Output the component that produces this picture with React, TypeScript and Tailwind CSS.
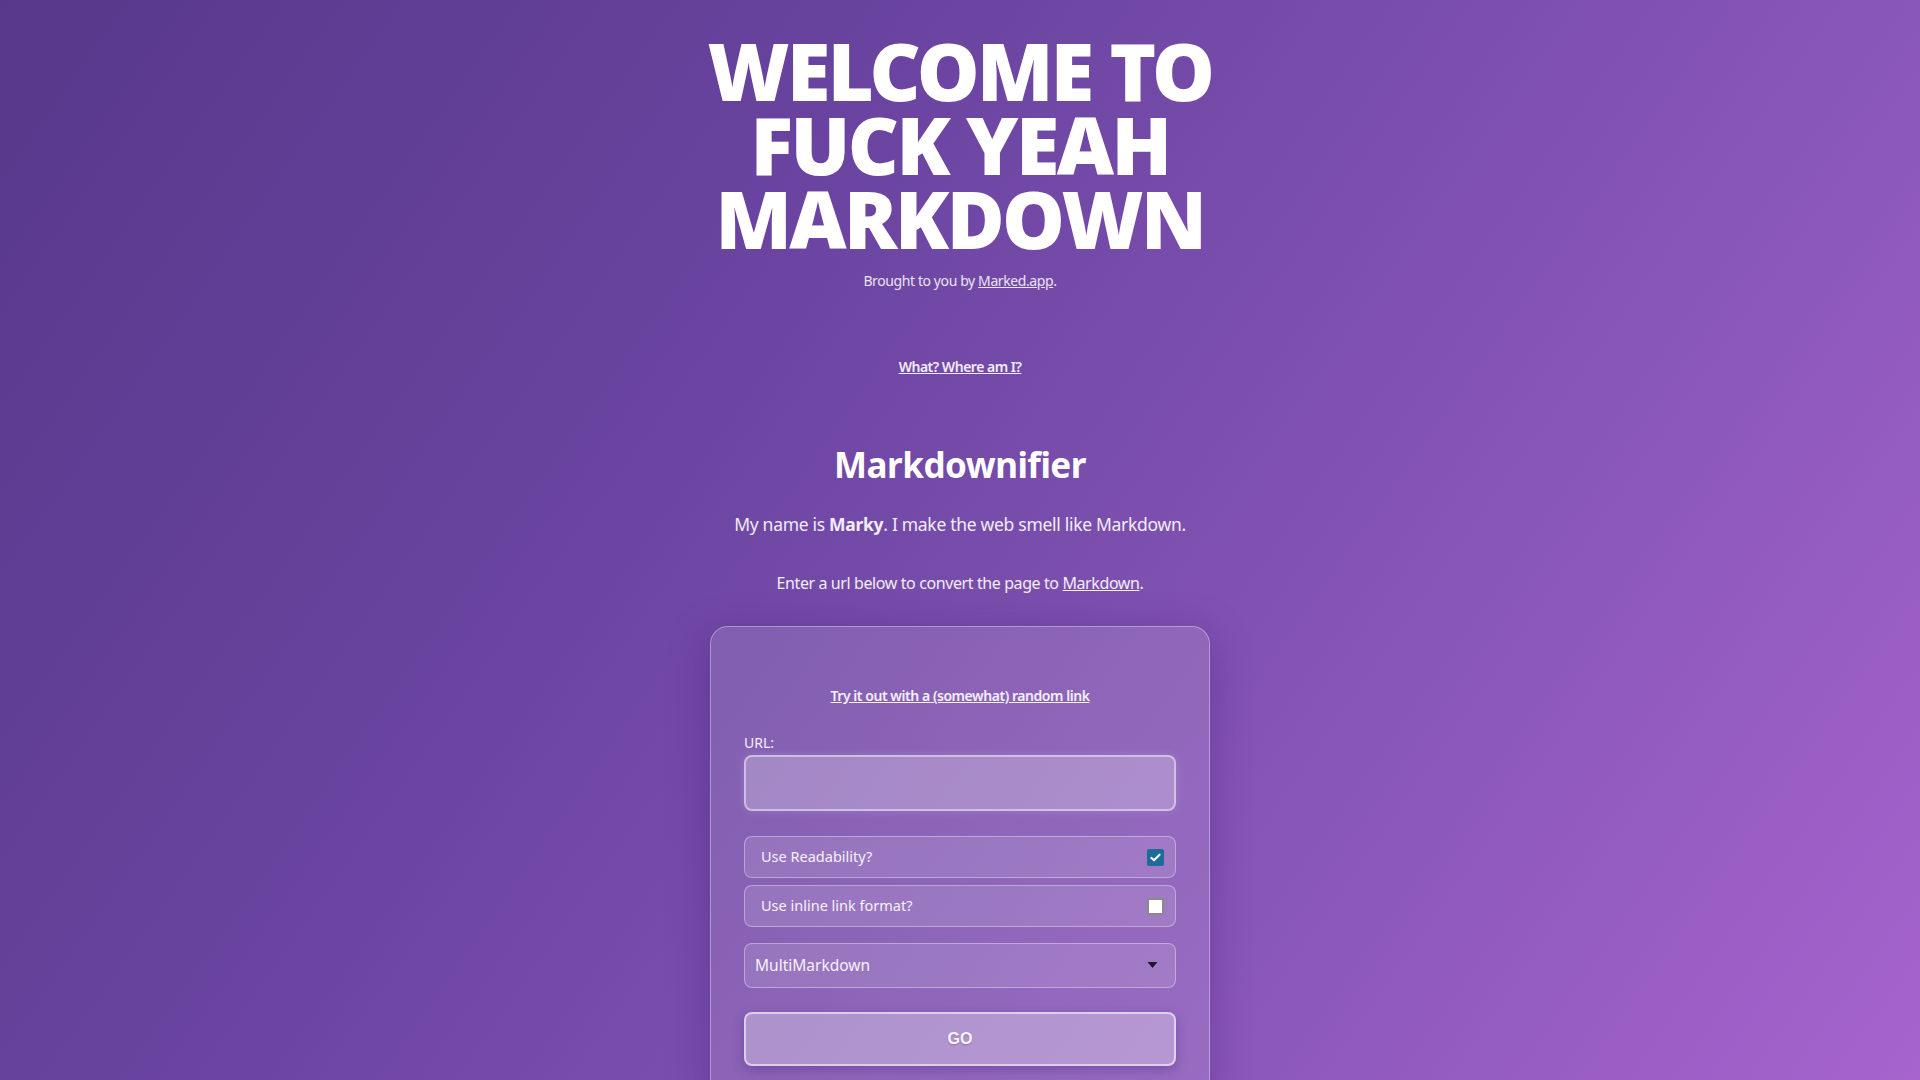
import React, { useState } from 'react';

const App: React.FC = () => {
  const [url, setUrl] = useState('');
  const [readability, setReadability] = useState(true);
  const [inline, setInline] = useState(false);
  const [format, setFormat] = useState('MultiMarkdown');

  return (
    <div className="min-h-screen w-full overflow-hidden bg-[linear-gradient(125deg,#57388a_0%,#6a44a0_35%,#8856b8_70%,#a764ce_100%)] font-['Noto_Sans',sans-serif] text-white">
      <div className="mx-auto flex w-[560px] flex-col items-center pt-[34px] text-center">
        <h1 className="font-['Noto_Sans',sans-serif] text-[79px] font-black uppercase leading-[74px] tracking-[-2.6px] text-white">
          Welcome to
          <br />
          Fuck yeah
          <br />
          Markdown
        </h1>
        <p className="mt-[14px] text-[14px] tracking-[-0.4px] text-white/85">
          Brought to you by{' '}
          <a href="#" className="underline">
            Marked.app
          </a>
          .
        </p>

        <a href="#" className="mt-[65px] text-[14px] font-semibold tracking-[-0.5px] text-white/90 underline">
          What? Where am I?
        </a>

        <h2 className="mt-[66px] text-[35px] font-bold leading-tight tracking-[-0.5px] text-white">Markdownifier</h2>
        <p className="mt-[24px] text-[17.5px] tracking-[-0.3px] text-white/90">
          My name is <strong className="font-bold">Marky</strong>. I make the web smell like Markdown.
        </p>
        <p className="mt-[34px] text-[16px] tracking-[-0.4px] text-white/90">
          Enter a url below to convert the page to{' '}
          <a href="#" className="underline">
            Markdown
          </a>
          .
        </p>
      </div>

      <div className="mx-auto mt-[31px] w-[500px] rounded-[18px] border border-white/35 bg-white/12 px-[33px] pb-10 pt-[56px] shadow-[0_10px_40px_rgba(60,20,110,0.35)]">
        <div className="text-center">
          <a href="#" className="text-[14px] font-semibold tracking-[-0.45px] text-white/90 underline">
            Try it out with a (somewhat) random link
          </a>
        </div>

        <label className="mt-[25px] block text-[14px] text-white/90">URL:</label>
        <input
          value={url}
          onChange={(e) => setUrl(e.target.value)}
          className="mt-[2px] block h-[56px] w-full rounded-[8px] border-2 border-white/45 bg-white/25 px-3 text-[16px] text-white outline-none shadow-[0_0_10px_rgba(255,255,255,0.15)]"
        />

        <label className="mt-[25px] flex h-[42px] items-center justify-between rounded-[8px] border border-white/35 bg-white/12 pl-4 pr-[11px] text-[14.5px] text-white/90">
          <span>Use Readability?</span>
          <span
            onClick={() => setReadability(!readability)}
            className={`flex h-[17px] w-[17px] items-center justify-center rounded-[2px] ${
              readability ? 'bg-[#1f6c9c]' : 'border-2 border-[#8a8a8a] bg-white'
            }`}
          >
            {readability && (
              <svg viewBox="0 0 16 16" className="h-[13px] w-[13px]" fill="none" stroke="white" strokeWidth="2.6" strokeLinecap="round" strokeLinejoin="round">
                <path d="M3 8.5l3.2 3L13 4.5" />
              </svg>
            )}
          </span>
        </label>

        <label className="mt-[7px] flex h-[42px] items-center justify-between rounded-[8px] border border-white/35 bg-white/12 pl-4 pr-[11px] text-[14.5px] text-white/90">
          <span>Use inline link format?</span>
          <span
            onClick={() => setInline(!inline)}
            className={`flex h-[17px] w-[17px] items-center justify-center rounded-[2px] ${
              inline ? 'bg-[#1f6c9c]' : 'border-2 border-[#8a8a8a] bg-white'
            }`}
          >
            {inline && (
              <svg viewBox="0 0 16 16" className="h-[13px] w-[13px]" fill="none" stroke="white" strokeWidth="2.6" strokeLinecap="round" strokeLinejoin="round">
                <path d="M3 8.5l3.2 3L13 4.5" />
              </svg>
            )}
          </span>
        </label>

        <div className="relative mt-[16px]">
          <select
            value={format}
            onChange={(e) => setFormat(e.target.value)}
            className="block h-[45px] w-full appearance-none rounded-[8px] border border-white/35 bg-white/12 pl-[10px] text-[15.5px] text-white/90 outline-none"
          >
            <option className="text-black">MultiMarkdown</option>
            <option className="text-black">GitHub Flavored Markdown</option>
            <option className="text-black">Markdown</option>
          </select>
          <svg viewBox="0 0 10 6" className="pointer-events-none absolute right-[18px] top-[19px] h-[6px] w-[11px]" fill="#1e1630">
            <path d="M0 0h10L5 6z" />
          </svg>
        </div>

        <button className="mt-[24px] block h-[54px] w-full rounded-[8px] border-2 border-white/55 bg-white/30 font-['Liberation_Sans',sans-serif] text-[16px] font-bold text-white/90 shadow-[0_4px_12px_rgba(60,20,110,0.3)] [text-shadow:0_1px_2px_rgba(0,0,0,0.2)]">
          GO
        </button>
      </div>
    </div>
  );
};

export default App;
